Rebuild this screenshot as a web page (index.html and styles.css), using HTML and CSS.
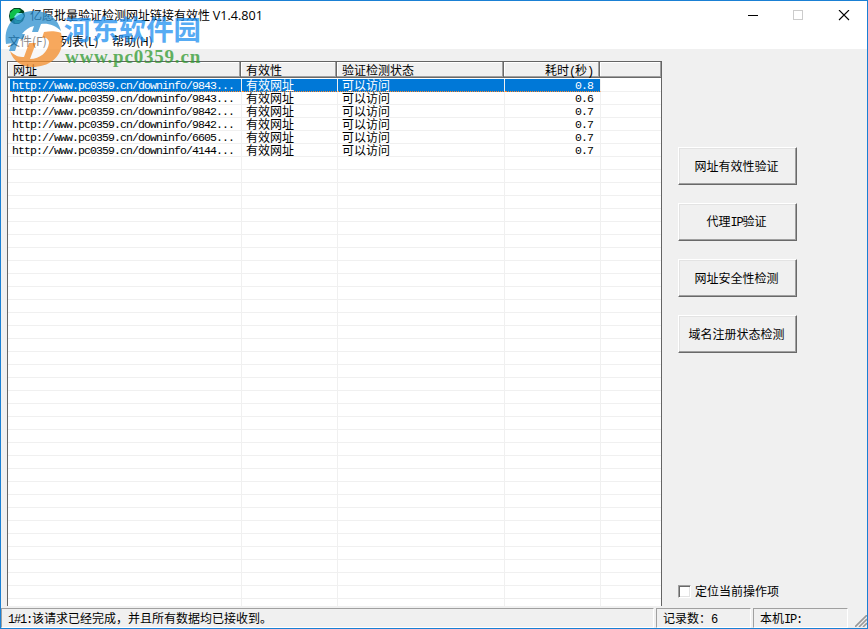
FILE: index.html
```
<!DOCTYPE html>
<html lang="zh-CN">
<head>
    <meta charset="UTF-8">
    <title>亿愿批量验证检测网址链接有效性 V1.4.801</title>
    <link rel="stylesheet" href="styles.css">
</head>
<body>
    <div class="window">
        <div class="titlebar">
            <svg class="app-icon" width="16" height="16" viewBox="0 0 16 16">
                <path d="M5 0h6l4 3 1 5-2 5-4 3H5l-4-3-1-5 1-5z" fill="#042"/>
                <path d="M5 1h5l2 2-4 3-3 4-4 1V5z" fill="#0fc04c"/>
                <path d="M8 5h5l2 3-3 4H8L5 9z" fill="#7de8ef"/>
                <path d="M5 11l4 2 4-1-3 3H6z" fill="#1a9c4c"/>
            </svg>
            <span class="title">亿愿批量验证检测网址链接有效性 <span class="version">V1.4.801</span></span>
            <svg class="controls" width="104" height="12" viewBox="0 0 104 12">
                <path d="M0 5.5h10" stroke="#000"/>
                <rect x="45.5" y=".5" width="9" height="9" fill="none" stroke="#ccc"/>
                <path d="M91 0l10 10M101 0L91 10" stroke="#000" stroke-width="1.1"/>
            </svg>
        </div>
        <div class="menubar">
            <span>文件(F)</span>
            <span>列表(L)</span>
            <span>帮助(H)</span>
        </div>

        <div class="main">
            <div class="list">
                <div class="list-head">
                    <div class="th">网址</div>
                    <div class="th">有效性</div>
                    <div class="th">验证检测状态</div>
                    <div class="th num">耗时<span class="mono">(</span>秒<span class="mono">)</span></div>
                    <div class="th"></div>
                </div>
                <div class="list-body" id="rows"></div>
            </div>
            <div class="side">
                <button>网址有效性验证</button>
                <button>代理<span class="mono">IP</span>验证</button>
                <button>网址安全性检测</button>
                <button>域名注册状态检测</button>
                <label class="check"><span class="box"></span>定位当前操作项</label>
            </div>
        </div>

        <div class="statusbar">
            <div class="panel message"><span class="mono">1#1:</span>该请求已经完成，并且所有数据均已接收到。</div>
            <div class="panel count">记录数：<span class="mono">6</span></div>
            <div class="panel ip">本机<span class="mono">IP:</span></div>
            <svg class="grip" width="12" height="12" viewBox="0 0 12 12">
                <path d="M0 12L12 0M4 12l8-8M8 12l4-4" stroke="#999" stroke-width="1.6"/>
            </svg>
        </div>

        <!-- 水印 -->
        <div class="watermark">
            <svg width="58" height="58" viewBox="0 0 58 58">
                <circle cx="29" cy="30" r="26" fill="#fff" opacity=".7"/>
                <path d="M1 34C-2 14 12 1 29 1c15 0 24 8 27 20-6-6-13-8-20-7l-3 8h-6l2-6c-5 1-9 4-12 8h-5l-4 9z" fill="#2b8fd0"/>
                <path d="M5 24h15l-2 5h-4l-4 12H4l4-12H4z" fill="#2b8fd0"/>
                <path d="M56 23c5 17-6 33-26 34C17 58 8 51 5 41c5 5 9 6 14 6l5-14h7l-6 16c10 0 18-7 19-16 0-4-3-6-7-5l2-6c9-2 16 0 17 1z" fill="#f58c28"/>
            </svg>
            <div class="wm-text">
                <div class="wm-name">河东软件园</div>
                <div class="wm-url">www.pc0359.cn</div>
            </div>
        </div>
    </div>

    <script>
        const records = [
            ['9843', '0.8'],
            ['9843', '0.6'],
            ['9842', '0.7'],
            ['9842', '0.7'],
            ['6605', '0.7'],
            ['4144', '0.7']
        ];
        const rows = document.getElementById('rows');
        for (let i = 0; i < 41; i++) {
            const row = document.createElement('div');
            row.className = i === 0 ? 'row selected' : 'row';
            const r = records[i];
            row.innerHTML = r
                ? `<div class="url">http://www.pc0359.cn/downinfo/${r[0]}...</div><div>有效网址</div><div>可以访问</div><div class="num">${r[1]}</div><div></div>`
                : '<div></div><div></div><div></div><div></div><div></div>';
            rows.appendChild(row);
        }
    </script>
</body>
</html>
```

FILE: styles.css
```
* {
    box-sizing: border-box;
}

body {
    margin: 0;
    font-family: "Noto Sans CJK SC", sans-serif;
    font-size: 12px;
    color: #000;
}

.window {
    position: relative;
    width: 868px;
    height: 629px;
    display: flex;
    flex-direction: column;
    border: 1px solid #1a80d4;
    background: #f0f0f0;
    overflow: hidden;
}

.mono {
    font-family: "Liberation Mono", monospace;
    font-size: 12px;
    letter-spacing: -1.2px;
}

.titlebar {
    display: flex;
    align-items: center;
    height: 29px;
    padding-left: 8px;
    background: #fff;
}

.title {
    margin-left: 5px;
    line-height: 28px;
    height: 29px;
    white-space: nowrap;
}

.version {
    font-family: "Open Sans", sans-serif;
    font-size: 12.6px;
}

.controls {
    margin-left: auto;
    margin-right: 15px;
}

.menubar {
    display: grid;
    grid-template-columns: 52px 52px 60px;
    height: 19px;
    padding-left: 7px;
    background: #fff;
    line-height: 21px;
}

.main {
    display: flex;
    flex: 1;
    min-height: 0;
    padding: 12px 0 0 6px;
}

.list {
    display: flex;
    flex-direction: column;
    width: 655px;
    border: 1px solid #646464;
    border-bottom: 0;
    background: #fff;
    overflow: hidden;
}

.list-head,
.row {
    display: grid;
    flex: none;
}

.list-head {
    grid-template-columns: 233px 96px 167px 96px 1fr;
    height: 16px;
}

.th {
    height: 16px;
    padding-left: 5px;
    background: #f0f0f0;
    border-right: 1px solid #696969;
    border-bottom: 1px solid #696969;
    box-shadow: inset -1px -1px #a0a0a0, inset 1px 1px #fff;
    line-height: 16px;
}

.th:last-child {
    border-right: 0;
}

.num {
    text-align: right;
    padding-right: 6px;
}

.row {
    grid-template-columns: 234px 96px 167px 96px 1fr;
    height: 13px;
}

.list-body {
    padding-top: 1px;
}

.row > div {
    height: 13px;
    padding-left: 4px;
    border-right: 1px solid #f0f0f0;
    border-bottom: 1px solid #f0f0f0;
    line-height: 11px;
    white-space: nowrap;
}

.row > div:last-child {
    border-right: 0;
}

.row .url,
.row .num {
    font-family: "Liberation Mono", monospace;
    font-size: 11.5px;
    letter-spacing: -0.9px;
    line-height: 13px;
}

.row .num {
    padding-right: 7px;
}

.row.selected > div:not(:last-child) {
    background: #0078d7;
    border-bottom: 1px dotted #ff8728;
    color: #fff;
}

.row.selected > .url {
    margin-left: 2px;
    padding-left: 2px;
}

.side {
    display: flex;
    flex-direction: column;
    flex: 1;
    padding: 86px 0 0 16px;
}

.side button {
    width: 119px;
    height: 38px;
    margin: 0 0 18px;
    padding: 0 2px 2px 0;
    border: 1px solid;
    border-color: #fff #696969 #696969 #fff;
    box-shadow: inset -1px -1px #a0a0a0, inset 1px 1px #e3e3e3;
    background: #f0f0f0;
    font-family: inherit;
    font-size: 12px;
    color: #000;
}

.check {
    display: flex;
    align-items: center;
    margin-top: auto;
    margin-bottom: 6px;
    line-height: 18px;
}

.box {
    width: 13px;
    height: 13px;
    margin-right: 4px;
    border: 1px solid;
    border-color: #a0a0a0 #fff #fff #a0a0a0;
    box-shadow: inset 1px 1px #696969, inset -1px -1px #e3e3e3;
    background: #fff;
}

.statusbar {
    display: flex;
    gap: 2px;
    height: 22px;
    padding-top: 2px;
}

.panel {
    height: 20px;
    padding-left: 6px;
    border: 1px solid;
    border-color: #a0a0a0 #fff #fff #a0a0a0;
    line-height: 18px;
    white-space: nowrap;
}

.message {
    width: 653px;
}

.count {
    width: 95px;
}

.ip {
    width: 95px;
}

.grip {
    margin: 7px 0 0 5px;
}

.watermark {
    position: absolute;
    left: 4px;
    top: 9px;
    display: flex;
    opacity: 0.75;
}

.wm-text {
    margin-left: 1px;
}

.wm-name {
    color: #1e90f0;
    font-size: 27.4px;
    font-weight: 700;
    line-height: 36px;
}

.wm-url {
    margin-left: 1px;
    color: #2f9a2f;
    font-family: "Liberation Serif", serif;
    font-size: 19px;
    font-weight: 700;
    line-height: 22px;
    letter-spacing: 0.8px;
}
```
